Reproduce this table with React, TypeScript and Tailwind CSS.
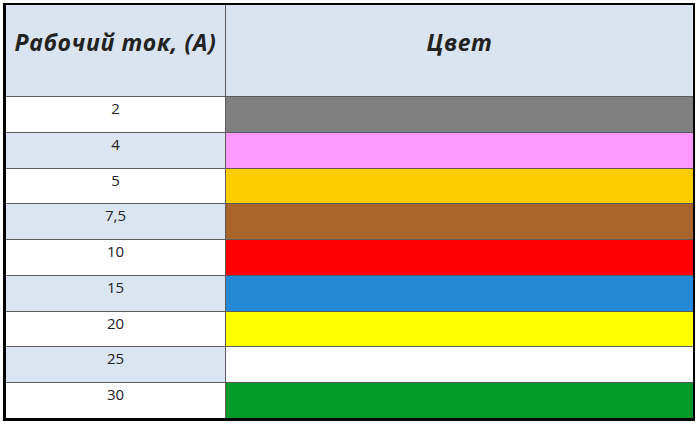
const rows = [
  { amp: "2", color: "#808080", shade: false },
  { amp: "4", color: "#ff99ff", shade: true },
  { amp: "5", color: "#ffcc00", shade: false },
  { amp: "7,5", color: "#a9642c", shade: true },
  { amp: "10", color: "#ff0000", shade: false },
  { amp: "15", color: "#2389d6", shade: true },
  { amp: "20", color: "#ffff00", shade: false },
  { amp: "25", color: "#ffffff", shade: true },
  { amp: "30", color: "#039a29", shade: false },
];

export default function App() {
  return (
    <div className="w-[700px] h-[429px] bg-white pt-[3px] pl-[3px] font-['Open_Sans',sans-serif] text-[#222]">
      <div className="w-[692px] h-[418px] border-black border-l-[3px] border-t-2 border-r-2 border-b-[3px] bg-[#5c5c5c] grid grid-cols-[219px_1fr] grid-rows-[91px_repeat(9,1fr)] gap-px">
        <div className="bg-[#d9e4f0] flex justify-center pt-[26px]">
          <span className="text-[23px] font-bold italic leading-none tracking-[0.6px]">Рабочий ток, (А)</span>
        </div>
        <div className="bg-[#d9e4f0] flex justify-center pt-[26px]">
          <span className="text-[23px] font-bold italic leading-none tracking-[0.6px]">Цвет</span>
        </div>
        {rows.map((row) => (
          <div key={row.amp} className="contents">
            <div className={`${row.shade ? "bg-[#dae5f1]" : "bg-white"} flex justify-center pt-[4px] text-[15px] leading-none`}>
              {row.amp}
            </div>
            <div style={{ backgroundColor: row.color }} />
          </div>
        ))}
      </div>
    </div>
  );
}
